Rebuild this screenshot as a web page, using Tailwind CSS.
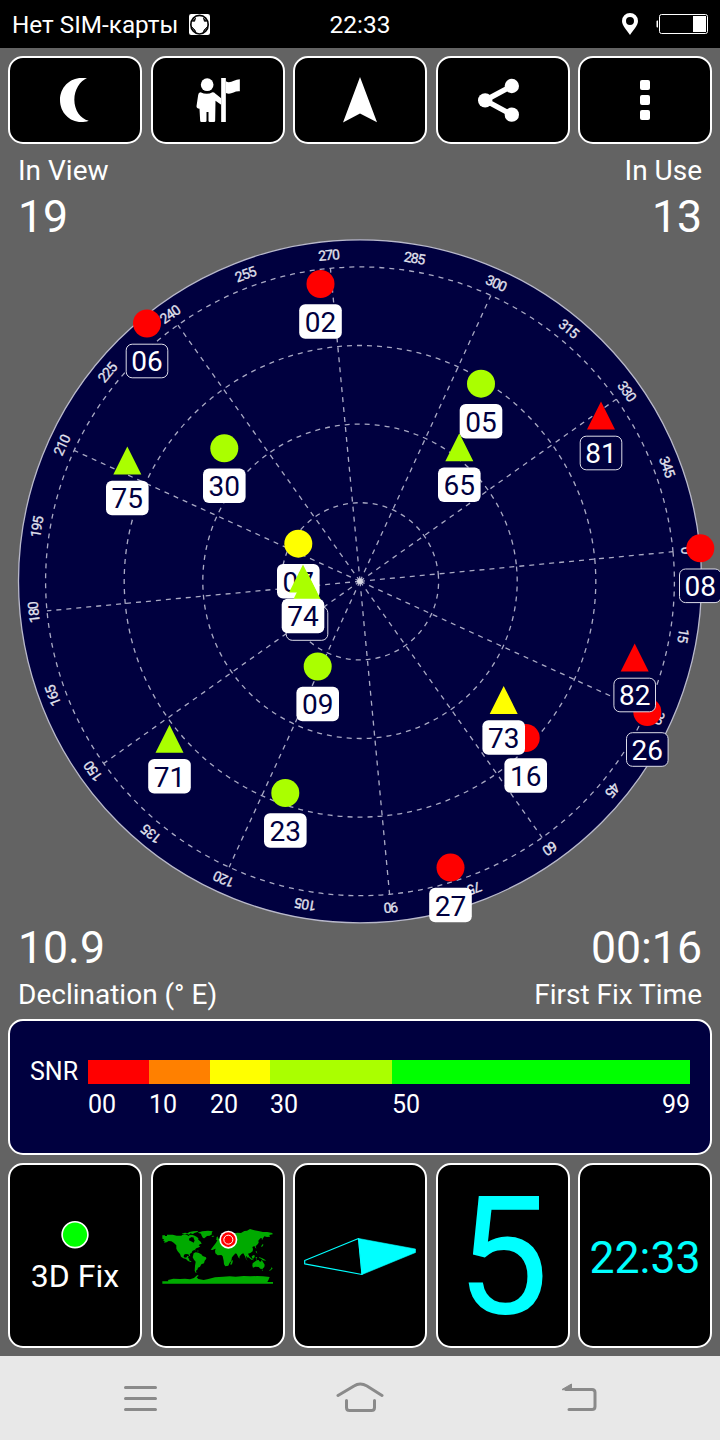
<!DOCTYPE html>
<html lang="en">

<head>
    <meta charset="UTF-8">
    <meta name="viewport" content="width=device-width, initial-scale=1.0">
    <title>GPS Status</title>
    <script src="https://cdn.jsdelivr.net/npm/@tailwindcss/browser@4"></script>
</head>

<body class="bg-[#636363] text-white font-[Roboto,sans-serif] w-[720px] h-[1440px] overflow-hidden">
    <!-- Status Bar -->
    <header class="grid grid-cols-3 items-center h-12 bg-black pl-3 pr-3 text-[24.5px] leading-[48px]">
        <div class="flex items-center gap-[11px] whitespace-nowrap">
            <span class="text-[24.3px] leading-[46px] pt-0.5">Нет SIM-карты</span>
            <svg class="w-[21px] h-[21px] shrink-0" viewBox="0 0 63 63">
                <rect width="63" height="63" rx="7" fill="#fff" />
                <ellipse cx="31.500" cy="32" rx="26" ry="28" fill="#fff" stroke="#000" stroke-width="5" />
                <path d="M8 38l10 10 3 8zM55 38l-10 10-3 8zM10 22l10-10-3 10zM53 22l-10-10 3 10z" fill="#000" stroke="#000" stroke-width="2" />
            </svg>
        </div>
        <div class="text-center leading-[46px] pt-0.5">22:33</div>
        <div class="flex items-center justify-end gap-[18px]">
            <svg class="w-4 h-[22px]" viewBox="0 0 16 22">
                <path fill="#fff" fill-rule="evenodd" d="M8 0a8 8 0 0 1 8 8c0 5-5 9-8 14C5 17 0 13 0 8a8 8 0 0 1 8-8zm0 4a4 4 0 1 0 0 8 4 4 0 0 0 0-8z" />
            </svg>
            <svg class="w-[52px] h-5" viewBox="0 0 52 20">
                <path d="M2 6.500H1.500A1 1 0 0 0 .5 7.500v5a1 1 0 0 0 1 1H2z" fill="#fff" />
                <rect x="3.500" y=".5" width="48" height="19" rx="2" fill="none" stroke="#fff" />
                <rect x="37" y="2" width="13" height="16" fill="#fff" />
            </svg>
        </div>
    </header>

    <!-- Toolbar -->
    <nav class="grid grid-cols-5 gap-[8.5px] px-2 pt-2">
        <button class="flex items-center justify-center h-[88px] bg-black border-2 border-white rounded-[15px]">
            <svg class="w-11 h-11" viewBox="159 234 132 132">
                <path fill="#fff" d="M261 235C240 242 223 270 223 299c0 31 18 57 43 63-7 3-15 4-22 4-36 0-64-29-64-66s29-66 64-66c6 0 12 0 17 1z" />
            </svg>
        </button>
        <button class="flex items-center justify-center h-[88px] bg-black border-2 border-white rounded-[15px]">
            <svg class="w-11 h-11" viewBox="587.500 234 132 132" fill="#fff">
                <circle cx="621" cy="254" r="19" />
                <path d="M601 277q-6 1-7 8l-5 34q0 7 9 7l2 36q0 4 4 4h11q4 0 4-4v-26h6v26q0 4 4 4h12q4 0 4-4l1-60 17 12v-19l-17-14q-4-4-9-4-16 9-36 0z" />
                <path d="M663 234h14v132h-14z" />
                <path d="M677 244c14 8 25-6 42-6v36c-17-2-26 12-42 5z" />
            </svg>
        </button>
        <button class="flex items-center justify-center h-[88px] bg-black border-2 border-white rounded-[15px]">
            <svg class="w-[46px] h-[46px]" viewBox="0 0 46 46">
                <path fill="#fff" d="M23 0L40 45.300 23 36.500 6 45.600z" />
            </svg>
        </button>
        <button class="flex items-center justify-center h-[88px] bg-black border-2 border-white rounded-[15px]">
            <svg class="w-11 h-11 overflow-visible" viewBox="362.500 234 132 132" fill="#fff">
                <path d="M455 258l-80 43 80 43" fill="none" stroke="#fff" stroke-width="16" />
                <circle cx="455" cy="258" r="21.500" />
                <circle cx="375" cy="301" r="21.500" />
                <circle cx="455" cy="344" r="21.500" />
            </svg>
        </button>
        <button class="flex items-center justify-center h-[88px] bg-black border-2 border-white rounded-[15px]">
            <svg class="w-2.5 h-10" viewBox="0 0 10 40" fill="#fff">
                <rect width="10" height="10" rx="2" />
                <rect y="15" width="10" height="10" rx="2" />
                <rect y="30" width="10" height="10" rx="2" />
            </svg>
        </button>
    </nav>

    <!-- Satellite counts -->
    <section class="flex justify-between h-[97px] pt-1.5 px-[18px]">
        <div>
            <p class="text-[28px] leading-[41px]">In View</p>
            <p class="text-[44.6px] leading-[52px]">19</p>
        </div>
        <div class="text-right">
            <p class="text-[28px] leading-[41px]">In Use</p>
            <p class="text-[44.6px] leading-[52px]">13</p>
        </div>
    </section>

    <!-- Sky plot -->
    <svg id="sky" class="block w-[720px] h-[680px] overflow-visible" viewBox="0 241 720 680">
        <circle cx="360" cy="581.300" r="341.500" fill="#00003f" stroke="#b9b9cb" stroke-width="1.300" />
        <g id="grid" fill="none" stroke="#a9a9c4" stroke-width="1.300" stroke-dasharray="5 5"></g>
        <circle cx="360" cy="581.300" r="3" fill="#fff" fill-opacity=".55" />
        <g id="degrees" fill="#e2e2ee" stroke="#e2e2ee" stroke-width=".3" font-size="14" text-anchor="middle"></g>
        <g id="satellites" font-size="28" text-anchor="middle"></g>
    </svg>

    <!-- Declination and fix time -->
    <section class="flex justify-between h-[98px] px-[18px]">
        <div>
            <p class="text-[44.6px] leading-[55px]">10.9</p>
            <p class="text-[28px] leading-[37px]">Declination (° E)</p>
        </div>
        <div class="text-right">
            <p class="text-[44.6px] leading-[55px]">00:16</p>
            <p class="text-[28px] leading-[37px]">First Fix Time</p>
        </div>
    </section>

    <!-- SNR legend -->
    <section class="mx-2 h-[136px] flex bg-[#00003f] border-2 border-white rounded-[15px] pt-[39px] pl-5 pr-5 text-[25px]">
        <div class="w-[58px] leading-6">SNR</div>
        <div class="flex-1">
            <div class="flex h-6">
                <div class="w-[61px] bg-[#ff0000]"></div>
                <div class="w-[61px] bg-[#ff8000]"></div>
                <div class="w-[60px] bg-[#ffff00]"></div>
                <div class="w-[122px] bg-[#aaff00]"></div>
                <div class="flex-1 bg-[#00ff00]"></div>
            </div>
            <div class="flex leading-[41px]">
                <span class="w-[61px]">00</span>
                <span class="w-[61px]">10</span>
                <span class="w-[60px]">20</span>
                <span class="w-[122px]">30</span>
                <span class="flex-1">50</span>
                <span>99</span>
            </div>
        </div>
    </section>

    <!-- Info tiles -->
    <section class="grid grid-cols-5 gap-[8.5px] px-2 pt-2 pb-2">
        <div class="flex flex-col items-center h-[185px] bg-black border-2 border-white rounded-[15px] pt-14">
            <svg class="w-7 h-7" viewBox="0 0 28 28">
                <circle cx="14" cy="13.700" r="12.900" fill="#00ff00" stroke="#fff" stroke-width="1.600" />
            </svg>
            <div class="text-[32px] leading-[55px]">3D Fix</div>
        </div>
        <div class="flex justify-center h-[185px] bg-black border-2 border-white rounded-[15px] pt-[65px]">
            <svg class="w-28 h-[55px] overflow-visible" viewBox="36 88 336 165">
                <g fill="#00aa00">
                    <path d="M37 104h8v2h6v-4h17l12 3h14l4-3h12l6 4 4-4 6 1-2 7-6 3-1 6 9 4 5 3 3-7-3-5 2-5 9 3 4 6 6 5 3 6-6 2-3 4 5 1-4 4-8 3-5 4-7 4-2 5-6 4 2 7-3-1-3-5-8-1-5 2-1 6 4 3 5-1 2-4h4l-2 6 4 2-1 5 5 2 3 1-3 2-8-3-6-6-8-2-7-5-3-8-7-8-4-8v-10l-8-8-7-4-8-1-6 4-8 1 2-4-5-3 4-3-6-2z" />
                    <path d="M95 99l10-3 8 2 5-4 12-2 12-1 3 2-12 4-4 3-8-2-4 4-7-3-5 3zM118 105l8-3 8 3 8 5 4 5-7 1-7-5-8-2zM143 96l14-4 17-2 14 2-3 5 1 4-7 4-8 1-8 7-4-1-4-7-2-6zM184 106l7-1 2 2-5 2zM123 145l10 1 6 3-8-1zM141 150h5v2h-5z" />
                    <path d="M131 158l6-3 8 1 9 5 4 5 10 4 1 4-5 6-2 8-8 3-4 7-6 3-2 6 -3 2-1 6 4 2-5-1-3-6 1-14 2-13-5-6-4-7z" />
                    <path d="M197 133l9 -4 12-1 4 5 8 1 10 2 5 12 4 7 8-1-3 7-8 8-2 12-5 5-4 9-9 2-4-6-1-11-3-13-4-4-11 1-7-6-1-8 3-9zM244 182l5-4-2 10-4 6-2-4zM198 126l5-9 6-3 1-5 10-8 6-6 8-1 8 4 11 2 8-4 12 1 10-6 8-1 9-5 13 4 12 2 14 3h13l15 3 1 4-10 2 2 5-9 1-8-2-4 6-3 6-1-7-4 1-6 7 1 6-5 7-4 3 2 8-3-3-3-5-6 3 2 6-1 7-7 5-7 2 4 8-4 5-6-7 1 9 4 6-5-5-3-8-5-9-5 2-6 7-1 7-3-4-5-11-9-1-3 1 3 5-6 7-8 4-6-9-5-13-9-1-2-6-6 4-3-6-5-2-7 3-6 3-6-1zM199 112l3-5 4 7-2 5-6-1 2-3z" />
                    <path d="M291 162l8 6 8 8 6 3-9-2-7-6zM305 167l6-4 4 2-3 8-5 1zM317 169h5l-3 4 2 5-3-2zM327 169l10 4 8 4 3 3-10-1-4-5-6-2zM317 151l3 1 2 7-4-4zM333 137l6-8 1 4-4 6z" />
                    <path d="M308 188l6-5 6-4 6-1 2 4 5 1 2-6 4 7 5 8-1 7-6 6-6-1-5-5-10-1-7 3-2-6zM335 207h4l-2 4zM364 200l4 3-4 4-5 4-1-2 5-4z" />
                    <path d="M37 242h18l-1-4 16-4 20 1 15-1 15 2 12-4 10-9 4 2-6 5 5 5 16 3 14-3 20-5 24-2 20-1 18 1 24-2 20 1 20-1 18 1 20 2-4 10-3 5h17v5H37z" />
                </g>
                <circle cx="235" cy="117" r="27" fill="#fff" />
                <circle cx="235" cy="117" r="22" fill="#ff0000" />
                <circle cx="235" cy="117" r="13.500" fill="#ff0000" stroke="#fff" stroke-width="3" />
            </svg>
        </div>
        <div class="flex justify-center h-[185px] bg-black border-2 border-white rounded-[15px] pt-[70.5px]">
            <svg class="w-[112px] h-10" viewBox="0 0 112 40" stroke="#00ffff" stroke-linejoin="round">
                <path d="M54.500 2.500L.7 24.500v3.300L58 38.500z" fill="#000" stroke-width="1.200" />
                <path d="M54.500 2.500L111.500 13v3.500L58 38.500z" fill="#00ffff" stroke-width=".6" />
            </svg>
        </div>
        <div class="h-[185px] bg-black border-2 border-white rounded-[15px] text-center text-[165px] leading-[184px] text-[#00ffff]">5</div>
        <div class="h-[185px] bg-black border-2 border-white rounded-[15px] text-center text-[44.6px] leading-[186px] text-[#00ffff]">22:33</div>
    </section>

    <!-- System navigation -->
    <footer class="flex h-[84px] justify-between bg-[#e8e8e8] pl-[124px] pr-[123px] pt-[26px]">
        <svg class="w-[33px] h-8" viewBox="0 0 33 32" fill="none" stroke="#8a8a8a" stroke-width="3" stroke-linecap="round">
            <path d="M1.500 5.500h30M1.500 16.500h30M1.500 27.500h30" />
        </svg>
        <svg class="w-[48px] h-8" viewBox="0 0 48 32" fill="none" stroke="#8a8a8a" stroke-width="3" stroke-linecap="round">
            <path d="M2 13.500L18 4q6-4 13 0l15 9.500M10.500 18.500v7q0 3 3 3h22q3 0 3-3v-7" />
        </svg>
        <svg class="w-[35px] h-8" viewBox="0 0 35 32" fill="none" stroke="#8a8a8a" stroke-width="3" stroke-linecap="round">
            <path d="M4 7.500h26q3 0 3 3v14q0 3-3 3H7" />
            <path d="M0 7.500L9.500 2v5.500z" fill="#8a8a8a" stroke-width="1" />
        </svg>
    </footer>

    <script>
        const CX = 360, CY = 581.3, HEADING = -5.4;

        // Elevation rings and azimuth spokes
        let grid = '';
        [78.6, 157.2, 235.8, 314.4].forEach(r => {
            grid += `<circle cx="${CX}" cy="${CY}" r="${r}" transform="rotate(${HEADING} ${CX} ${CY})"/>`;
        });
        for (let az = 0; az < 360; az += 30) {
            grid += `<path d="M${CX} ${CY}h314.400" transform="rotate(${HEADING + az} ${CX} ${CY})"/>`;
        }
        document.getElementById('grid').innerHTML = grid;

        // Degree labels around the rim
        let degrees = '';
        for (let az = 0; az < 360; az += 15) {
            const len = String(az).length * 7.2;
            degrees += `<text x="${CX}" y="${CY - 322.8}" textLength="${len}" lengthAdjust="spacing" transform="rotate(${HEADING + az + 90} ${CX} ${CY})">${az}</text>`;
        }
        document.getElementById('degrees').innerHTML = degrees;

        const RED = '#ff0000', YELLOW = '#ffff00', LIME = '#aaff00';

        // [id, x, y, color, in use, shape]
        const satellites = [
            ['02', 320.5, 284, RED, true, 'circle'],
            ['06', 147, 323.5, RED, false, 'circle'],
            ['05', 481, 383.7, LIME, true, 'circle'],
            ['30', 224.3, 448.3, LIME, true, 'circle'],
            ['07', 298.3, 543.7, YELLOW, true, 'circle'],
            ['09', 317.7, 666.5, LIME, true, 'circle'],
            ['23', 285.3, 793, LIME, true, 'circle'],
            ['27', 450.5, 867.6, RED, true, 'circle'],
            ['16', 525.7, 738, RED, true, 'circle'],
            ['26', 647.3, 712, RED, false, 'circle'],
            ['08', 700.3, 548.3, RED, false, 'circle'],
            ['', 307, 586, LIME, false, 'triangle'],
            ['65', 459.3, 447.3, LIME, true, 'triangle'],
            ['71', 169.5, 738.7, LIME, true, 'triangle'],
            ['73', 503.7, 700, YELLOW, true, 'triangle'],
            ['74', 303, 578.5, LIME, true, 'triangle'],
            ['75', 127.3, 460.5, LIME, true, 'triangle'],
            ['81', 601, 415.5, RED, false, 'triangle'],
            ['82', 634.7, 657.5, RED, false, 'triangle'],
        ];

        document.getElementById('satellites').innerHTML = satellites.map(([id, x, y, color, used, shape]) => {
            const mark = shape === 'circle'
                ? `<circle cx="${x}" cy="${y}" r="14" fill="${color}"/>`
                : `<path d="M${x} ${y - 14}l14 28h-28z" fill="${color}"/>`;
            const box = used
                ? `<rect x="${x - 21.3}" y="${y + 20.2}" width="42.600" height="34.500" rx="6" fill="#fff"/>`
                : `<rect x="${x - 20.8}" y="${y + 20.7}" width="41.600" height="33.600" rx="6" fill="#00003f" stroke="#dcdce8"/>`;
            return `${mark}${box}<text x="${x}" y="${y + 47.9}" fill="${used ? '#00003f' : '#fff'}">${id}</text>`;
        }).join('');
    </script>
</body>

</html>
